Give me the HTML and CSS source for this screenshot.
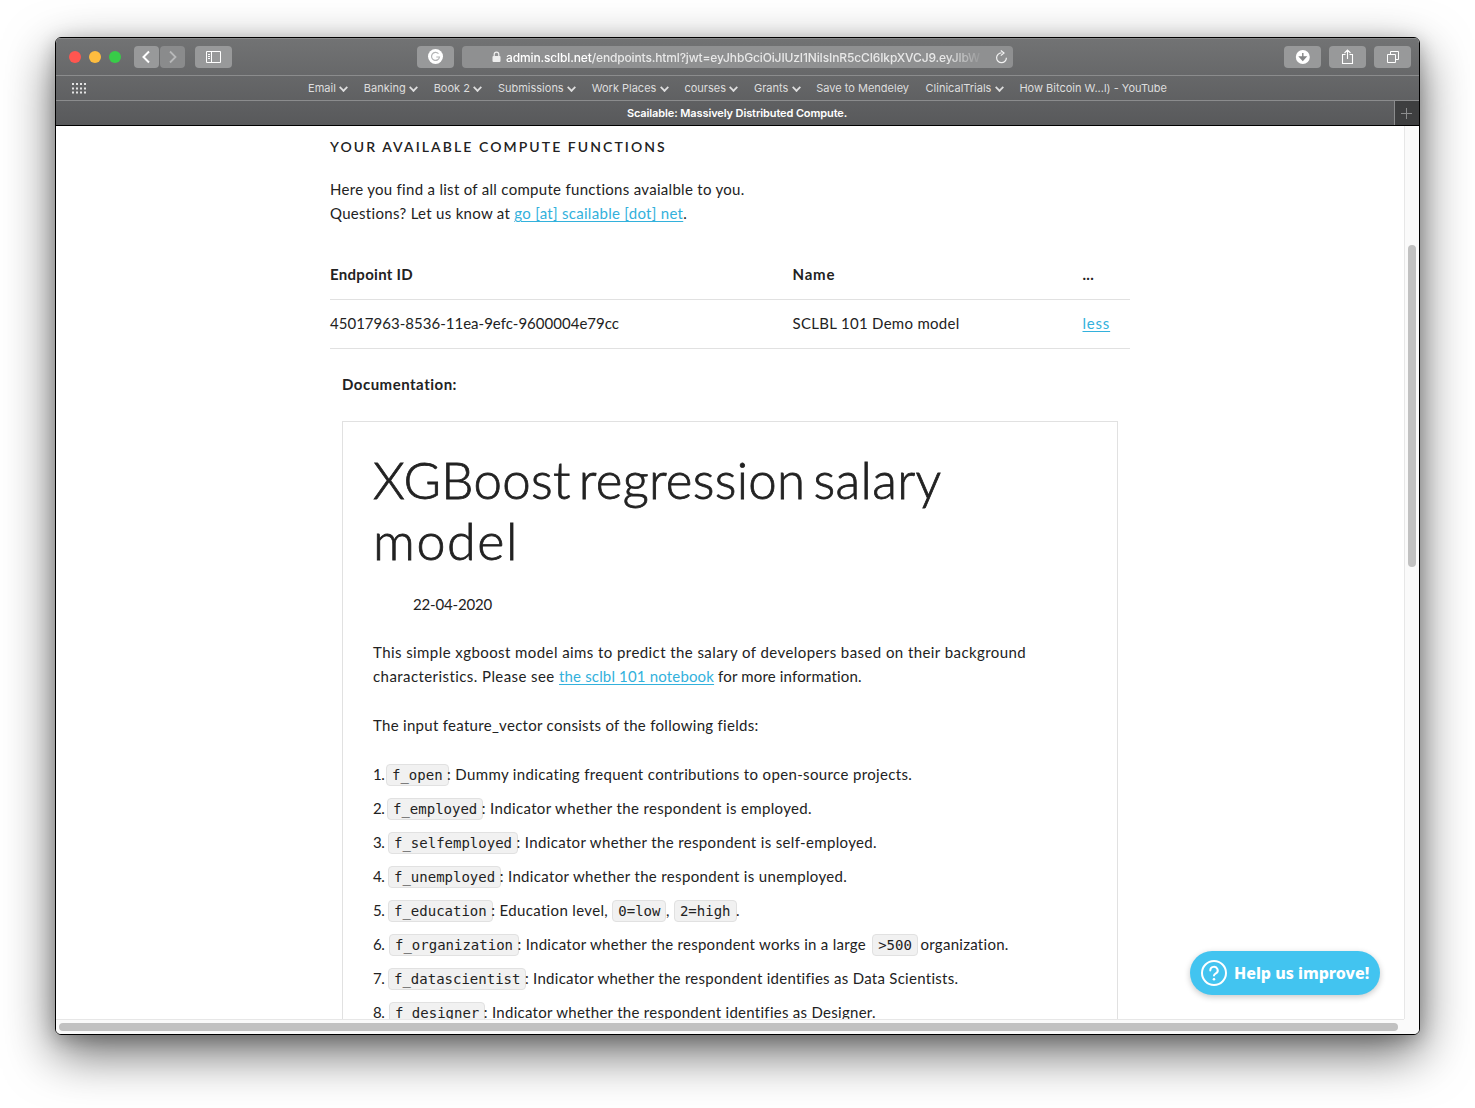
FILE: index.html
```html
<!DOCTYPE html>
<html lang="en">
<head>
<meta charset="utf-8">
<title>Scailable: Massively Distributed Compute.</title>
<link rel="stylesheet" href="styles.css">
</head>
<body>
<div class="window">
  <header class="chrome">
    <div class="toolbar">
      <div class="side">
        <div class="lights"><i class="light red"></i><i class="light yellow"></i><i class="light green"></i></div>
        <div class="nav">
          <span class="btn small left"><svg width="25" height="22" viewBox="0 0 25 22"><path d="M15 5.500 9.500 11l5.500 5.500" fill="none" stroke="#fff" stroke-width="2"/></svg></span>
          <span class="btn small right"><svg width="25" height="22" viewBox="0 0 25 22"><path d="M10 5.500 15.500 11 10 16.500" fill="none" stroke="#b7b8b9" stroke-width="1.800"/></svg></span>
        </div>
        <span class="btn"><svg width="37" height="22" viewBox="0 0 37 22"><path d="M11.500 5.500h14v11h-14zM16.500 5.500v11M13 8.500h2M13 10.500h2M13 12.500h2" fill="none" stroke="#fff"/></svg></span>
      </div>
      <div class="center">
        <span class="btn"><svg width="37" height="22" viewBox="0 0 37 22"><circle cx="18.500" cy="10.500" r="7.500" fill="#fff"/><path d="M21.500 7.700a4 4 0 1 0 1 3.300h-3.200" fill="none" stroke="#b4b5b6" stroke-width="1.200"/></svg></span>
        <div class="address">
          <svg class="lock" width="9" height="12" viewBox="0 0 9 12"><rect x=".5" y="5" width="8" height="6" rx="1" fill="#eee"/><path d="M2.200 5.500V3.500a2.300 2.300 0 0 1 4.600 0v2" fill="none" stroke="#eee" stroke-width="1.200"/></svg>
          <span class="url"><b>admin.sclbl.net</b>/endpoints.html?jwt=eyJhbGciOiJIUzI1NiIsInR5cCI6IkpXVCJ9.eyJlbW</span>
          <svg class="reload" width="13" height="14" viewBox="0 0 13 14"><path d="M6.500 2.900A4.900 4.900 0 1 0 11.400 7.800" fill="none" stroke="#f2f2f2" stroke-width="1.200"/><path d="M5.800.5 9 3 5.800 5.600" fill="none" stroke="#f2f2f2" stroke-width="1.200"/></svg>
        </div>
      </div>
      <div class="side end">
        <span class="btn"><svg width="37" height="22" viewBox="0 0 37 22"><circle cx="18.800" cy="11" r="7" fill="#fff"/><path d="M18.800 7v6M15.900 11l2.900 3.200 2.900-3.200z" fill="#858687" stroke="#858687" stroke-width="1.400"/></svg></span>
        <span class="btn"><svg width="37" height="22" viewBox="0 0 37 22"><path d="M16.500 8.500h-3v9h10v-9h-3M18.500 13V4M15.500 7l3-3 3 3" fill="none" stroke="#fff" stroke-width="1.100"/></svg></span>
        <span class="btn"><svg width="37" height="22" viewBox="0 0 37 22"><path d="M13.500 8.500h8v8h-8zM16.500 8V5.500h8v8H22" fill="none" stroke="#fff"/></svg></span>
      </div>
    </div>
    <nav class="bookmarks">
      <svg class="grid-icon" width="14" height="11" viewBox="0 0 14 11"><path d="M0 1h14M0 5.500h14M0 9.500h14" stroke="#e4e4e4" stroke-width="2" stroke-dasharray="2 2"/></svg>
      <span class="mark menu">Email</span><span class="mark menu">Banking</span><span class="mark menu">Book 2</span><span class="mark menu">Submissions</span><span class="mark menu">Work Places</span><span class="mark menu">courses</span><span class="mark menu">Grants</span><span class="mark">Save to Mendeley</span><span class="mark menu">ClinicalTrials</span><span class="mark">How Bitcoin W...l) - YouTube</span>
    </nav>
    <div class="tabs">
      <span class="tab">Scailable: Massively Distributed Compute.</span>
      <span class="add"><svg width="11" height="11" viewBox="0 0 11 11"><path d="M0 5.500h11M5.500 0v11" stroke="#8c8d8e"/></svg></span>
    </div>
  </header>

  <div class="viewport">
    <main class="page">
      <div class="content">
        <h5 class="eyebrow">YOUR AVAILABLE COMPUTE FUNCTIONS</h5>
        <p class="intro">Here you find a list of all compute functions avaialble to you.<br>Questions? Let us know at <a>go [at] scailable [dot] net</a>.</p>
        <div class="row head"><span>Endpoint ID</span><span class="name">Name</span><span>...</span></div>
        <div class="row"><span class="id">45017963-8536-11ea-9efc-9600004e79cc</span><span>SCLBL 101 Demo model</span><a class="less">less</a></div>
        <div class="details">
          <strong class="doc-label">Documentation:</strong>
          <article class="doc">
            <h1>XGBoost regression salary <span class="model">model</span></h1>
            <p class="date">22-04-2020</p>
            <p><span class="wide">This simple xgboost model aims to predict the salary of developers based on their background<br>characteristics. Please see </span><span class="tight"><a>the sclbl 101 notebook</a> for more information.</span></p>
            <p>The input feature_vector consists of the following fields:</p>
            <div class="fields">
              <div><span class="n n1">1.</span><code>f_open</code>: Dummy indicating frequent contributions to open-source projects.</div>
              <div><span class="n n2">2.</span><code>f_employed</code>: Indicator whether the respondent is employed.</div>
              <div><span class="n">3.</span><code>f_selfemployed</code>: Indicator whether the respondent is self-employed.</div>
              <div><span class="n">4.</span><code>f_unemployed</code>: Indicator whether the respondent is unemployed.</div>
              <div><span class="n">5.</span><code>f_education</code>: Education level, <code class="value">0=low</code>, <code class="value">2=high</code>.</div>
              <div class="dense"><span class="n n6">6.</span><code>f_organization</code>: Indicator whether the respondent works in a large <code>&gt;500</code> organization.</div>
              <div class="dense"><span class="n">7.</span><code>f_datascientist</code>: Indicator whether the respondent identifies as Data Scientists.</div>
              <div class="dense"><span class="n n6">8.</span><code>f_designer</code>: Indicator whether the respondent identifies as Designer.</div>
            </div>
          </article>
        </div>
      </div>
    </main>
    <div class="vtrack"><div class="vthumb"></div></div>
    <div class="htrack"><div class="hthumb"></div></div>
    <div class="help"><svg width="26" height="26" viewBox="0 0 26 26"><circle cx="13" cy="13" r="12" fill="none" stroke="#fff" stroke-width="2"/><path d="M9.300 10.400a3.700 3.500 0 1 1 5.600 2.900c-1.300.8-1.900 1.200-1.900 2.200" fill="none" stroke="#fff" stroke-width="2" stroke-linecap="round"/><circle cx="13" cy="19.300" r="1.300" fill="#fff"/></svg><span>Help us improve!</span></div>
  </div>
</div>
</body>
</html>
```
FILE: styles.css
```css
* { box-sizing: border-box; }
body {
  margin: 0;
  height: 1108px;
  padding: 37px 55px 73px;
  overflow: hidden;
  background: #fff;
}
.window {
  width: 1365px;
  height: 998px;
  border: 1px solid #000;
  border-radius: 6px;
  overflow: hidden;
  display: flex;
  flex-direction: column;
  box-shadow: 0 18px 50px rgba(0, 0, 0, .6), 0 4px 18px rgba(0, 0, 0, .22);
}

/* Browser chrome */
.chrome {
  height: 88px;
  flex: none;
  background: linear-gradient(#727374, #58595b);
  border-bottom: 1px solid #000;
  box-shadow: inset 0 1px #898a8b;
  font-family: Inter, sans-serif;
  color: #dedede;
}
.toolbar {
  height: 38px;
  display: grid;
  grid-template-columns: 361px 1fr 361px;
  align-items: center;
  border-bottom: 1px solid #8b8c8d;
}
.side { display: flex; align-items: center; padding-left: 13px; }
.side.end { justify-content: flex-end; gap: 8px; padding: 0 8px 0 0; }
.lights { display: flex; gap: 8px; margin-right: 13px; }
.light { width: 12px; height: 12px; border-radius: 50%; }
.red { background: #ff5650; }
.yellow { background: #febd3f; }
.green { background: #38cc48; }
.nav { display: flex; gap: 1px; margin-right: 10px; }
.btn {
  display: block;
  width: 37px;
  height: 22px;
  border-radius: 4px;
  background: #98999a;
}
.btn svg { display: block; }
.btn.small { width: 25px; }
.btn.right { background: #8a8b8c; }
.center { display: flex; gap: 8px; }
.address {
  width: 551px;
  height: 22px;
  border-radius: 4px;
  background: #8f9091;
  display: flex;
  align-items: center;
  padding: 0 5px 0 30px;
}
.lock { margin-right: 5px; }
.url {
  flex: 1;
  padding-top: 1px;
  font-size: 12px;
  font-weight: 500;
  letter-spacing: -.14px;
  white-space: nowrap;
  overflow: hidden;
  color: #e8e8e8;
  -webkit-mask-image: linear-gradient(to right, #000 440px, transparent 478px);
  mask-image: linear-gradient(to right, #000 440px, transparent 478px);
}
.url b { font-weight: 500; color: #fff; letter-spacing: -.13px; }
.bookmarks {
  position: relative;
  height: 25px;
  display: flex;
  justify-content: center;
  align-items: center;
  gap: 16.500px;
  border-bottom: 1px solid #8b8c8d;
  font-size: 11px;
  white-space: nowrap;
}
.grid-icon { position: absolute; left: 16px; top: 7px; }
.menu { display: flex; align-items: center; gap: 4.500px; }
.menu::after {
  content: "";
  width: 5px;
  height: 5px;
  border: solid #dedede;
  border-width: 0 2px 2px 0;
  transform: translateY(-1px) rotate(45deg) scale(.9);
}
.tabs { height: 24px; display: flex; line-height: 25px; }
.tab {
  flex: 1;
  padding-left: 24px;
  text-align: center;
  font-size: 11px;
  font-weight: 600;
  letter-spacing: -.11px;
  color: #fff;
}
.add {
  width: 25px;
  padding-right: 2px;
  display: flex;
  align-items: center;
  justify-content: center;
  border-left: 1px solid #8b8c8d;
  background: #3e3f40;
}

/* Scrolling page area */
.viewport {
  position: relative;
  flex: 1;
  min-height: 0;
  display: grid;
  grid-template-columns: 1fr 15px;
  grid-template-rows: 893px 15px;
  background: #fafafa;
}
.page { overflow: hidden; background: #fff; }
.vtrack { border-left: 1px solid #e7e7e7; padding: 119px 3px 0; }
.vthumb { width: 8px; height: 322px; border-radius: 4px; background: #c1c1c1; }
.htrack { border-top: 1px solid #e7e7e7; padding: 3px 3px 0; }
.hthumb { width: 1339px; height: 8px; border-radius: 4px; background: #c1c1c1; }

.content {
  width: 800px;
  margin-left: 274px;
  padding-top: 9px;
  font: 15px/24px Lato, sans-serif;
  letter-spacing: .295px;
  color: #222;
  white-space: nowrap;
}
.content a { color: #33b1dc; text-decoration: underline; text-underline-offset: 2px; }
.eyebrow {
  margin: 0 0 18px;
  font-size: 14px;
  font-weight: 600;
  line-height: 24px;
  letter-spacing: 2.07px;
}
.intro { margin: 0 0 26px; }
.row {
  display: grid;
  grid-template-columns: 462.5px 290px 1fr;
  padding: 11px 0 13px;
  border-bottom: 1px solid #e1e1e1;
}
.head { font-weight: 700; }
.head .name { letter-spacing: .8px; }
.id { letter-spacing: .014px; }
.content .less { letter-spacing: .8px; justify-self: start; }
.details { padding: 23px 12px 0; }
.doc-label { display: block; margin-bottom: 25px; letter-spacing: .5px; }
.doc { border: 1px solid #e1e1e1; padding: 28px 30px 30px; height: 700px; }
.doc h1 {
  margin: 0 0 22px;
  font-size: 51px;
  font-weight: 300;
  line-height: 60px;
  letter-spacing: .3px;
  word-spacing: -6px;
  -webkit-text-stroke: .8px #222;
}
.model { display: block; height: 60px; font-size: 52px; letter-spacing: 1.6px; }
.doc p { margin: 0 0 25px; }
.doc .date { margin-bottom: 24px; padding-left: 40px; letter-spacing: -.17px; }
.wide { letter-spacing: .425px; }
.tight { letter-spacing: .165px; }
.fields { display: grid; row-gap: 10px; letter-spacing: .35px; }
.fields > div { height: 24px; }
.fields .dense { letter-spacing: .28px; }
.fields .n { display: inline-block; width: 13px; letter-spacing: -.4px; }
.fields .n1 { width: 11px; }
.fields .n2 { width: 12px; }
.fields .n6 { width: 14px; }
code {
  display: inline-block;
  height: 22px;
  margin: 0 -1.5px 0 2px;
  padding: 0 5px;
  border: 1px solid #e1e1e1;
  border-radius: 4px;
  background: #f1f1f1;
  font: 14px/20px "DejaVu Sans Mono", monospace;
  letter-spacing: 0;
}
code.value { margin: 0 -.500px 0 0; }

.help {
  position: absolute;
  left: 1134px;
  top: 825px;
  width: 190px;
  height: 44px;
  display: flex;
  align-items: center;
  gap: 7px;
  padding-left: 11px;
  border-radius: 22px;
  background: #42c4f0;
  box-shadow: 0 2px 6px rgba(0, 0, 0, .22);
  color: #fff;
  font: 800 16px "Noto Sans", sans-serif;
  letter-spacing: -.02px;
  white-space: nowrap;
}
```
